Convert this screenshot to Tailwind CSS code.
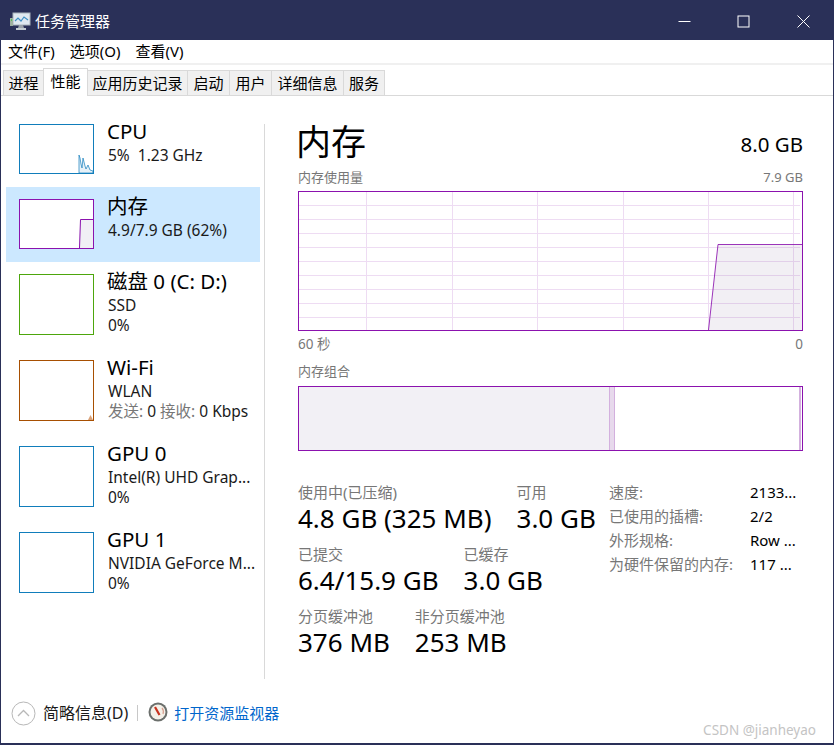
<!DOCTYPE html>
<html lang="zh-CN">
<head>
    <meta charset="UTF-8">
    <title>任务管理器</title>
    <script src="https://cdn.jsdelivr.net/npm/@tailwindcss/browser@4"></script>
</head>
<body class="bg-white">
<div class="w-[834px] h-[745px] overflow-hidden flex flex-col bg-white border-x border-t-2 border-b-2 border-[#2a3058] text-black font-['Noto_Sans','Noto_Sans_CJK_SC',sans-serif]">

    <!-- Title bar -->
    <div class="h-[38px] shrink-0 bg-[#2a3058] flex items-center text-white">
        <svg class="ml-[9px] w-[21px] h-[19px]" viewBox="0 0 21 19">
            <rect x="3" y="1" width="17" height="12" fill="#dfe8f0" stroke="#aab4bc"/>
            <path d="M5 9l3-3 3 3 3-4 4 3" fill="none" stroke="#3f8fc4" stroke-width="1.2"/>
            <rect x="0" y="6" width="3" height="8" fill="#9fb0a0"/>
            <rect x="1" y="7" width="1" height="2" fill="#52c052"/>
            <path d="M9 13h4l1 3H8z" fill="#9aa2aa"/>
            <rect x="6" y="16" width="10" height="2" fill="#c4ccd2"/>
        </svg>
        <span class="ml-[4px] text-[15px] leading-none">任务管理器</span>
        <div class="ml-auto flex items-center">
            <svg class="w-[13px] h-[13px] mr-[46px]" viewBox="0 0 13 13"><path d="M0.5 6.5h12" stroke="#fff"/></svg>
            <svg class="w-[13px] h-[13px] mr-[47px]" viewBox="0 0 13 13"><rect x="1" y="1" width="11" height="11" fill="none" stroke="#fff"/></svg>
            <svg class="w-[13px] h-[13px] mr-[23px]" viewBox="0 0 13 13"><path d="M0.5 0.5l12 12M12.5 0.5l-12 12" stroke="#fff"/></svg>
        </div>
    </div>

    <!-- Menu -->
    <div class="h-[23px] shrink-0 flex items-center text-[15px] pl-[7px] gap-[15px] leading-none">
        <span>文件(F)</span>
        <span>选项(O)</span>
        <span>查看(V)</span>
    </div>
    <div class="h-[2px] shrink-0 bg-[#f0f0f0]"></div>

    <!-- Tabs -->
    <div class="h-[31px] shrink-0 flex items-end pl-[2px] border-b border-[#d9d9d9] text-[15px] leading-none">
        <div class="w-[40px] h-[25px] flex items-center justify-center bg-[#f0f0f0] border border-r-0 border-b-0 border-[#d9d9d9]">进程</div>
        <div class="w-[45px] h-[28px] -mb-px pb-[3px] flex items-center justify-center bg-white border border-b-0 border-[#d9d9d9]">性能</div>
        <div class="w-[100px] h-[25px] flex items-center justify-center bg-[#f0f0f0] border-t border-r border-[#d9d9d9]">应用历史记录</div>
        <div class="w-[42px] h-[25px] flex items-center justify-center bg-[#f0f0f0] border-t border-r border-[#d9d9d9]">启动</div>
        <div class="w-[42px] h-[25px] flex items-center justify-center bg-[#f0f0f0] border-t border-r border-[#d9d9d9]">用户</div>
        <div class="w-[72px] h-[25px] flex items-center justify-center bg-[#f0f0f0] border-t border-r border-[#d9d9d9]">详细信息</div>
        <div class="w-[41px] h-[25px] flex items-center justify-center bg-[#f0f0f0] border-t border-r border-[#d9d9d9]">服务</div>
    </div>

    <!-- Content -->
    <div class="flex-1 flex min-h-0">
        <!-- Sidebar -->
        <div class="w-[263px] shrink-0 pt-[16px] pl-[5px] text-[#1a1a1a]">
            <div class="h-[75px] w-[254px] flex pl-[13px] pt-[12px]">
                <div class="w-[75px] h-[50px] shrink-0 border border-[#117dbb] bg-white">
                    <svg class="block w-[73px] h-[48px]" viewBox="0 0 73 48">
                        <path d="M59 48V30l1 3 1 6 1 4 1-10 2 8 1 3 2-4 2 5 3 1V48z" fill="#e6f1f8" stroke="#117dbb" stroke-width="0.7"/>
                    </svg>
                </div>
                <div class="ml-[13px] -mt-[5px] min-w-0">
                    <div class="text-[20.5px] leading-[24px] text-black">CPU</div>
                    <div class="mt-[2px] pl-px text-[15.5px] leading-[20px]">5%&nbsp; 1.23 GHz</div>
                </div>
            </div>
            <div class="h-[75px] w-[254px] flex pl-[13px] pt-[12px] bg-[#cce8ff]">
                <div class="w-[75px] h-[50px] shrink-0 border border-[#8b12ae] bg-white">
                    <svg class="block w-[73px] h-[48px]" viewBox="0 0 73 48">
                        <path d="M59 48l1-29H73V48z" fill="#f1eff5"/>
                        <path d="M59.5 48l1-28.5H73" fill="none" stroke="#8b12ae"/>
                    </svg>
                </div>
                <div class="ml-[13px] -mt-[5px] min-w-0">
                    <div class="text-[20.5px] leading-[24px] text-black">内存</div>
                    <div class="mt-[2px] pl-px text-[15.5px] leading-[20px]">4.9/7.9 GB (62%)</div>
                </div>
            </div>
            <div class="h-[86px] w-[254px] flex pl-[13px] pt-[12px]">
                <div class="w-[75px] h-[61px] shrink-0 border border-[#4da60c] bg-white"></div>
                <div class="ml-[13px] -mt-[5px] min-w-0">
                    <div class="text-[20.5px] leading-[24px] text-black whitespace-nowrap">磁盘 0 (C: D:)</div>
                    <div class="mt-[2px] pl-px text-[15.5px] leading-[20px]">SSD</div>
                    <div class="pl-px text-[15.5px] leading-[20px]">0%</div>
                </div>
            </div>
            <div class="h-[86px] w-[254px] flex pl-[13px] pt-[12px]">
                <div class="w-[75px] h-[61px] shrink-0 border border-[#a74f01] bg-white flex items-end justify-end">
                    <svg class="block w-[5px] h-[5px]" viewBox="0 0 5 5"><path d="M0 5l2.5-5 2.5 5z" fill="#d9a27a"/></svg>
                </div>
                <div class="ml-[13px] -mt-[5px] min-w-0">
                    <div class="text-[20.5px] leading-[24px] text-black">Wi-Fi</div>
                    <div class="mt-[2px] pl-px text-[15.5px] leading-[20px]">WLAN</div>
                    <div class="pl-px text-[15.5px] leading-[20px] whitespace-nowrap"><span class="text-[#777]">发送:</span> 0 <span class="text-[#777]">接收:</span> 0 Kbps</div>
                </div>
            </div>
            <div class="h-[86px] w-[254px] flex pl-[13px] pt-[12px]">
                <div class="w-[75px] h-[61px] shrink-0 border border-[#117dbb] bg-white"></div>
                <div class="ml-[13px] -mt-[5px] min-w-0">
                    <div class="text-[20.5px] leading-[24px] text-black">GPU 0</div>
                    <div class="mt-[2px] pl-px text-[15.5px] leading-[20px] whitespace-nowrap">Intel(R) UHD Grap...</div>
                    <div class="pl-px text-[15.5px] leading-[20px]">0%</div>
                </div>
            </div>
            <div class="h-[86px] w-[254px] flex pl-[13px] pt-[12px]">
                <div class="w-[75px] h-[61px] shrink-0 border border-[#117dbb] bg-white"></div>
                <div class="ml-[13px] -mt-[5px] min-w-0">
                    <div class="text-[20.5px] leading-[24px] text-black">GPU 1</div>
                    <div class="mt-[2px] pl-px text-[15.5px] leading-[20px] whitespace-nowrap">NVIDIA GeForce M...</div>
                    <div class="pl-px text-[15.5px] leading-[20px]">0%</div>
                </div>
            </div>
        </div>

        <!-- Divider -->
        <div class="w-px h-[555px] mt-[28px] shrink-0 bg-[#d9d9d9]"></div>

        <!-- Memory panel -->
        <div class="w-[505px] ml-[33px] shrink-0">
            <div class="h-[70px] pt-[24px] flex items-end justify-between">
                <span class="text-[35px] leading-[44px] -ml-[2px] mb-[2px]">内存</span>
                <span class="text-[20.5px] leading-[24px] mb-[10px]">8.0 GB</span>
            </div>
            <div class="h-[25px] pb-[2px] flex items-center justify-between text-[13px] text-[#777] leading-none">
                <span>内存使用量</span>
                <span>7.9 GB</span>
            </div>
            <svg class="block w-[505px] h-[140px]" viewBox="0 0 505 140">
                <g stroke="#eedcf3" fill="none">
                    <path d="M1 14.5H502M1 28.5H502M1 42.5H502M1 56.5H502M1 70.5H502M1 84.5H502M1 98.5H502M1 112.5H502M1 126.5H502"/>
                    <path d="M68.5 1V139M154.5 1V139M239.5 1V139M325.5 1V139M410.5 1V139M495.5 1V139"/>
                </g>
                <path d="M410.5 139L420 53.5H504V139z" fill="#8b6f9b" fill-opacity="0.11" stroke="none"/>
                <path d="M410.5 139L420 53.5H504" fill="none" stroke="#8b12ae" stroke-opacity="0.85"/>
                <rect x="0.5" y="0.5" width="504" height="139" fill="none" stroke="#8b12ae"/>
            </svg>
            <div class="h-[26px] pt-[2px] flex items-center justify-between text-[13.5px] text-[#777] leading-none">
                <span>60 秒</span>
                <span>0</span>
            </div>
            <div class="h-[29px] flex items-center text-[13px] text-[#777] leading-none">内存组合</div>
            <div class="h-[65px] border border-[#8b12ae] flex">
                <div class="w-[310px] bg-[#f2f0f5]"></div>
                <div class="w-[6px] bg-[#e7d9ec] border-x border-[#d3b0de]"></div>
                <div class="flex-1"></div>
                <div class="w-[2px] mr-px bg-[#d3b0de]"></div>
            </div>

            <!-- Stats -->
            <div class="flex mt-[31px]">
                <div class="w-[311px]">
                    <div class="flex gap-[25px] h-[62px]">
                        <div><div class="text-[15px] leading-[20px] text-[#777]">使用中(已压缩)</div><div class="text-[26px] leading-[32px] whitespace-nowrap">4.8 GB (325 MB)</div></div>
                        <div><div class="text-[15px] leading-[20px] text-[#777]">可用</div><div class="text-[26px] leading-[32px] whitespace-nowrap">3.0 GB</div></div>
                    </div>
                    <div class="flex gap-[25px] h-[62px]">
                        <div><div class="text-[15px] leading-[20px] text-[#777]">已提交</div><div class="text-[26px] leading-[32px] whitespace-nowrap">6.4/15.9 GB</div></div>
                        <div><div class="text-[15px] leading-[20px] text-[#777]">已缓存</div><div class="text-[26px] leading-[32px] whitespace-nowrap">3.0 GB</div></div>
                    </div>
                    <div class="flex gap-[25px] h-[62px]">
                        <div><div class="text-[15px] leading-[20px] text-[#777]">分页缓冲池</div><div class="text-[26px] leading-[32px] whitespace-nowrap">376 MB</div></div>
                        <div><div class="text-[15px] leading-[20px] text-[#777]">非分页缓冲池</div><div class="text-[26px] leading-[32px] whitespace-nowrap">253 MB</div></div>
                    </div>
                </div>
                <div class="flex-1 text-[15px] leading-[24px] -mt-[2px]">
                    <div class="flex"><span class="w-[141px] text-[#777]">速度:</span><span>2133...</span></div>
                    <div class="flex"><span class="w-[141px] text-[#777]">已使用的插槽:</span><span>2/2</span></div>
                    <div class="flex"><span class="w-[141px] text-[#777]">外形规格:</span><span>Row ...</span></div>
                    <div class="flex"><span class="w-[141px] text-[#777]">为硬件保留的内存:</span><span>117 ...</span></div>
                </div>
            </div>
        </div>
    </div>

    <!-- Footer -->
    <div class="h-[60px] shrink-0 flex items-start pl-[10px] pt-[18px] relative">
        <svg class="w-[25px] h-[25px] shrink-0" viewBox="0 0 25 25">
            <circle cx="12.5" cy="12.5" r="11.5" fill="#fff" stroke="#b8b8b8"/>
            <path d="M7 15l5.5-5.5L18 15" fill="none" stroke="#b8b8b8" stroke-width="1.3"/>
        </svg>
        <span class="ml-[7px] text-[16px] leading-[25px] text-[#1a1a1a]">简略信息(D)</span>
        <div class="w-px h-[16px] mt-[4px] ml-[9px] bg-[#c8c8c8]"></div>
        <svg class="ml-[10px] w-[20px] h-[20px] shrink-0 mt-[1px]" viewBox="0 0 20 20">
            <circle cx="10" cy="10" r="9.5" fill="#6b6f6c"/>
            <circle cx="10" cy="10" r="7.5" fill="#f4f0e8"/>
            <path d="M7 5l4.5 8" stroke="#c8321e" stroke-width="2.2"/>
            <path d="M14 6a6 6 0 0 1 1 6" fill="none" stroke="#d8a090" stroke-width="1.2"/>
        </svg>
        <span class="ml-[6px] text-[15px] leading-[25px] text-[#0066cc]">打开资源监视器</span>
        <span class="absolute right-[17px] top-[41px] text-[13.5px] leading-none text-[#c4c4c4]">CSDN @jianheyao</span>
    </div>
</div>
</body>
</html>
